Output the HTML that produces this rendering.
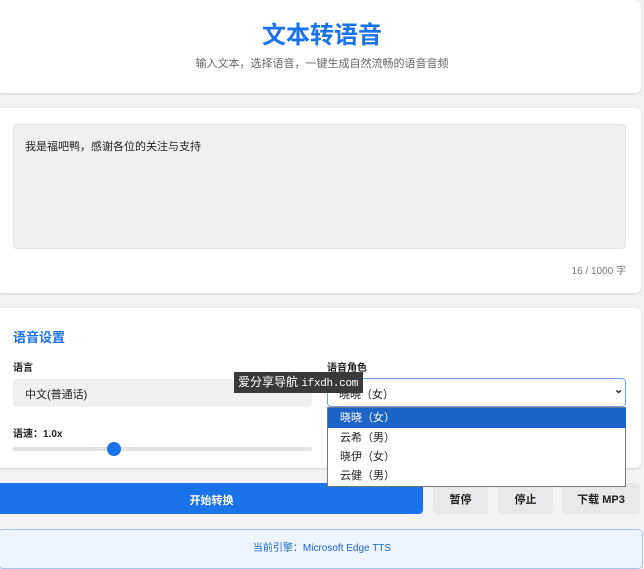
<!DOCTYPE html><html><head><meta charset="utf-8"><style>
*{box-sizing:border-box;margin:0;padding:0}
body{width:644px;height:555px;overflow:hidden;background:#f2f2f5;font-family:"Liberation Sans","Noto Sans CJK SC",sans-serif;position:relative}
.a{position:absolute}
.card{position:absolute;left:0;width:641px;background:#fff;border-radius:0 6px 6px 0;box-shadow:0 1px 2px rgba(0,0,0,.12)}
.t{position:absolute;white-space:nowrap}
.btn{position:absolute;top:483px;height:31px;background:#e9e9ec;border-radius:4px;font-size:11px;font-weight:bold;color:#222;display:flex;align-items:center;justify-content:center}
.opt{position:absolute;left:0;width:298px;height:20px;font-size:11px;color:#222;padding-left:12px;line-height:20px}
</style></head><body>
<div class="card" style="top:0;height:93px"></div>
<div class="t" style="left:0;width:644px;text-align:center;top:15px;font-size:24px;font-weight:bold;color:#1a73e8">文本转语音</div>
<div class="t" style="left:0;width:644px;text-align:center;top:55px;font-size:11px;color:#666">输入文本，选择语音，一键生成自然流畅的语音音频</div>

<div class="card" style="top:108px;height:185px"></div>
<div class="a" style="left:13px;top:124px;width:613px;height:125px;background:#f0f0f2;border-radius:4px;border:1px solid #e4e4e8"></div>
<div class="t" style="left:25px;top:138px;font-size:11px;color:#222">我是福吧鸭，感谢各位的关注与支持</div>
<div class="t" style="right:18px;top:262px;font-size:10px;color:#777">16 / 1000 字</div>

<div class="card" style="top:308px;height:160px"></div>
<div class="t" style="left:13px;top:327px;font-size:13px;font-weight:bold;color:#1a73e8">语音设置</div>
<div class="t" style="left:13px;top:359px;font-size:10px;font-weight:bold;color:#222">语言</div>
<div class="t" style="left:327px;top:359px;font-size:10px;font-weight:bold;color:#222">语音角色</div>
<div class="a" style="left:13px;top:379px;width:299px;height:28px;background:#f0f0f2;border-radius:4px"></div>
<div class="t" style="left:25px;top:386px;font-size:11px;color:#222">中文(普通话)</div>
<div class="t" style="left:302px;top:385px;font-size:10px;color:#222">⌄</div>
<div class="a" style="left:327px;top:378px;width:299px;height:29px;border:1px solid #6aa0ec;border-radius:4px;background:#fff"></div>
<div class="t" style="left:339px;top:386px;font-size:11px;color:#222">晓晓（女）</div>
<div class="t" style="left:614px;top:383px;font-size:11px;color:#222;font-weight:bold">⌄</div>
<div class="t" style="left:13px;top:425px;font-size:10px;font-weight:bold;color:#222">语速：1.0x</div>
<div class="a" style="left:13px;top:447px;width:299px;height:4px;background:#e3e3e7;border-radius:2px"></div>
<div class="a" style="left:107px;top:442px;width:14px;height:14px;background:#1a73e8;border-radius:50%"></div>

<div class="a" style="left:0;top:483px;width:423px;height:31px;background:#1a73e8;border-radius:0 4px 4px 0"></div>
<div class="t" style="left:0;width:423px;text-align:center;top:492px;font-size:11px;font-weight:bold;color:#fff">开始转换</div>
<div class="btn" style="left:433px;width:55px">暂停</div>
<div class="btn" style="left:498px;width:55px">停止</div>
<div class="btn" style="left:562px;width:78px">下载 MP3</div>

<div class="a" style="left:-2px;top:529px;width:645px;height:40px;background:#eef4fe;border:1px solid #a9c3ee;border-radius:5px"></div>
<div class="t" style="left:0;width:644px;text-align:center;top:539px;font-size:10px;color:#1a66d0">当前引擎：Microsoft Edge TTS</div>

<div class="a" style="left:327px;top:407px;width:299px;height:80px;background:#fff;border:1px solid #777">
<div class="opt" style="top:0;background:#1c63c7;color:#fff">晓晓（女）</div>
<div class="opt" style="top:20px">云希（男）</div>
<div class="opt" style="top:39px">晓伊（女）</div>
<div class="opt" style="top:58px">云健（男）</div>
</div>
<div class="a" style="left:234px;top:372px;width:129px;height:21px;background:#3a3a3a;color:#fff;font-size:12px;line-height:21px;padding-left:4px;white-space:nowrap;overflow:hidden">爱分享导航 <span style="font-family:'Liberation Mono',monospace;font-size:11px;letter-spacing:-0.3px">ifxdh.com</span></div>
</body></html>
